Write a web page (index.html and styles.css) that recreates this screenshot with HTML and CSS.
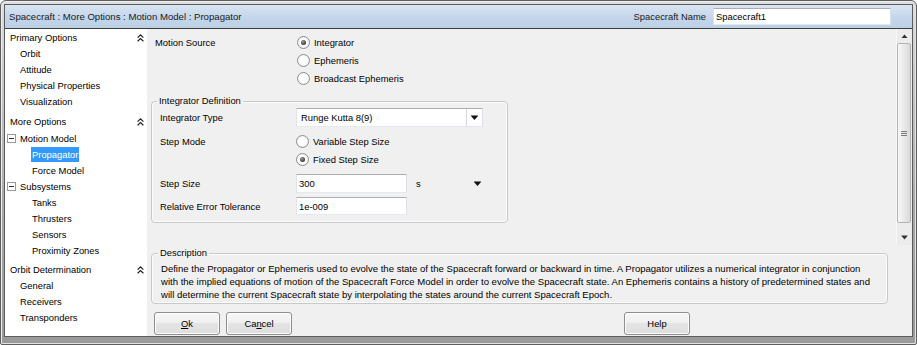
FILE: index.html
```html
<!DOCTYPE html>
<html>
    <head>
        <title>Spacecraft - Propagator</title>
        <link rel="stylesheet" href="styles.css">
    </head>
    <body>
        <div class="window">
            <div class="inner">
                <div class="titlebar">
                    <span class="title">Spacecraft : More Options : Motion Model : Propagator</span>
                    <label class="name-field">Spacecraft Name <input class="textbox name-input" type="text" value="Spacecraft1"></label>
                </div>
                <div class="client">
                    <div class="sidebar">
                        <div class="section">
                            <div class="section-head">Primary Options
                                <svg class="collapse" width="7" height="8" viewBox="0 0 7 8"><path d="M0.6 3.6 L3.5 0.9 L6.4 3.6 M0.6 7.3 L3.5 4.6 L6.4 7.3" fill="none" stroke="#222" stroke-width="1.2"/></svg>
                            </div>
                            <div class="item">Orbit</div>
                            <div class="item">Attitude</div>
                            <div class="item">Physical Properties</div>
                            <div class="item">Visualization</div>
                        </div>
                        <div class="section">
                            <div class="section-head">More Options
                                <svg class="collapse" width="7" height="8" viewBox="0 0 7 8"><path d="M0.6 3.6 L3.5 0.9 L6.4 3.6 M0.6 7.3 L3.5 4.6 L6.4 7.3" fill="none" stroke="#222" stroke-width="1.2"/></svg>
                            </div>
                            <div class="node"><span class="expander"></span>Motion Model</div>
                            <div class="leaf"><span class="selected">Propagator</span></div>
                            <div class="leaf"><span>Force Model</span></div>
                            <div class="node"><span class="expander"></span>Subsystems</div>
                            <div class="leaf"><span>Tanks</span></div>
                            <div class="leaf"><span>Thrusters</span></div>
                            <div class="leaf"><span>Sensors</span></div>
                            <div class="leaf"><span>Proximity Zones</span></div>
                        </div>
                        <div class="section">
                            <div class="section-head">Orbit Determination
                                <svg class="collapse" width="7" height="8" viewBox="0 0 7 8"><path d="M0.6 3.6 L3.5 0.9 L6.4 3.6 M0.6 7.3 L3.5 4.6 L6.4 7.3" fill="none" stroke="#222" stroke-width="1.2"/></svg>
                            </div>
                            <div class="item">General</div>
                            <div class="item">Receivers</div>
                            <div class="item">Transponders</div>
                        </div>
                    </div>
                    <div class="main">
                        <div class="scroll-area">
                            <div class="scroll-content">
                                <div class="motion-source">
                                    <div class="row">
                                        <span class="label wide">Motion Source</span>
                                        <span class="radio checked"></span><span class="radio-text">Integrator</span>
                                    </div>
                                    <div class="row">
                                        <span class="label wide"></span>
                                        <span class="radio"></span><span class="radio-text">Ephemeris</span>
                                    </div>
                                    <div class="row">
                                        <span class="label wide"></span>
                                        <span class="radio"></span><span class="radio-text">Broadcast Ephemeris</span>
                                    </div>
                                </div>
                                <fieldset class="group integrator">
                                    <legend>Integrator Definition</legend>
                                    <div class="row type-row">
                                        <span class="label">Integrator Type</span>
                                        <div class="combo">
                                            <span class="combo-text">Runge Kutta 8(9)</span>
                                            <span class="combo-btn"><svg width="7" height="5" viewBox="0 0 7 5"><path d="M0 1h7L3.5 5z M0 0h7v0.6H0z" fill="#111"/></svg></span>
                                        </div>
                                    </div>
                                    <div class="row mode-row">
                                        <span class="label">Step Mode</span>
                                        <span class="radio"></span><span class="radio-text">Variable Step Size</span>
                                    </div>
                                    <div class="row">
                                        <span class="label"></span>
                                        <span class="radio checked"></span><span class="radio-text">Fixed Step Size</span>
                                    </div>
                                    <div class="row size-row">
                                        <span class="label">Step Size</span>
                                        <input class="textbox field" type="text" value="300">
                                        <span class="unit">s</span>
                                        <svg class="unit-arrow" width="7" height="5" viewBox="0 0 7 5"><path d="M0 1h7L3.5 5z M0 0h7v0.6H0z" fill="#111"/></svg>
                                    </div>
                                    <div class="row tol-row">
                                        <span class="label">Relative Error Tolerance</span>
                                        <input class="textbox field" type="text" value="1e-009">
                                    </div>
                                </fieldset>
                            </div>
                            <div class="scrollbar">
                                <div class="sb-arrow up"><svg width="7" height="4" viewBox="0 0 7 4"><path d="M0.5 4h6L3.5 0.5z" fill="#333"/></svg></div>
                                <div class="sb-track">
                                    <div class="sb-thumb"><span class="grip"></span></div>
                                </div>
                                <div class="sb-arrow down"><svg width="7" height="5" viewBox="0 0 7 5"><path d="M0.5 1h6L3.5 4.5z M0.5 0h6v0.6h-6z" fill="#333"/></svg></div>
                            </div>
                        </div>
                        <fieldset class="group description">
                            <legend>Description</legend>
                            <p>Define the Propagator or Ephemeris used to evolve the state of the Spacecraft forward or backward in time. A Propagator utilizes a numerical integrator in conjunction<br>with the implied equations of motion of the Spacecraft Force Model in order to evolve the Spacecraft state. An Ephemeris contains a history of predetermined states and<br>will determine the current Spacecraft state by interpolating the states around the current Spacecraft Epoch.</p>
                        </fieldset>
                        <div class="button-row">
                            <button class="btn"><u>O</u>k</button>
                            <button class="btn">Ca<u>n</u>cel</button>
                            <button class="btn help">Help</button>
                        </div>
                    </div>
                </div>
            </div>
        </div>
    </body>
</html>
```

FILE: styles.css
```css
body{
    margin: 0;
    font-family: "Liberation Sans", Arial, sans-serif;
    font-size: 9.4px;
    color: #000;
    background-color: #fff;
}

.window{
    width: 917px;
    height: 345px;
    box-sizing: border-box;
    border: 1px solid #5e5e5e;
    border-radius: 6px 6px 2px 2px;
    padding: 3px 3px 7px 3px;
    background: linear-gradient(#dcdfe3, #cdd0d4 15%, #a9a9a9 60%, #9a9a9a);
    box-shadow: inset -1px -1px 0 #e2e2e2, inset 1px 1px 0 #eeeeee;
}

.inner{
    height: 100%;
    box-sizing: border-box;
    border: 1px solid #5c5c5c;
    display: flex;
    flex-direction: column;
}

/* title bar */
.titlebar{
    height: 23px;
    flex: none;
    border-bottom: 1px solid #3d3d3d;
    background: linear-gradient(#d8e4f1, #c3d5ea 60%, #bccfe6);
    display: flex;
    justify-content: space-between;
    align-items: center;
    padding: 0 21px 0 4px;
    color: #1a1a1a;
}

.title{
    font-size: 9.6px;
}

.name-field{
    display: flex;
    align-items: center;
    gap: 7px;
}

.name-input{
    width: 178px;
    height: 17px;
}

.client{
    flex: 1;
    display: flex;
    min-height: 0;
}

/* tree on the left */
.sidebar{
    width: 142px;
    flex: none;
    background-color: #fff;
}

.section + .section{
    margin-top: 3px;
}

.section-head{
    height: 17px;
    display: flex;
    justify-content: space-between;
    align-items: center;
    padding: 0 3px 0 5px;
}

.item{
    height: 16px;
    line-height: 16px;
    padding-left: 15px;
}

.node{
    height: 16px;
    display: flex;
    align-items: center;
    gap: 4px;
    padding-left: 2px;
}

.expander{
    width: 9px;
    height: 9px;
    box-sizing: border-box;
    border: 1px solid #9a9a9a;
    background-color: #fff;
    display: flex;
    align-items: center;
    justify-content: center;
}

.expander::after{
    content: "";
    width: 5px;
    height: 1px;
    background-color: #333;
}

.leaf{
    height: 16px;
    display: flex;
    align-items: center;
    padding-left: 26px;
}

.leaf span{
    height: 15px;
    line-height: 15px;
    padding: 0 1px;
}

.leaf .selected{
    background-color: #3399ff;
    color: #fff;
}

/* right side */
.main{
    flex: 1;
    display: flex;
    flex-direction: column;
    background-color: #f0f0f0;
    min-width: 0;
}

.scroll-area{
    height: 216px;
    flex: none;
    display: flex;
}

.scroll-content{
    flex: 1;
    padding: 4px 0 0 0;
}

.row{
    height: 18px;
    display: flex;
    align-items: center;
}

.label{
    width: 136px;
    flex: none;
}

.label.wide{
    width: 142px;
}

.motion-source{
    padding-left: 8px;
}

.radio{
    width: 13px;
    height: 13px;
    box-sizing: border-box;
    flex: none;
    border: 1px solid #8e8f8f;
    border-radius: 50%;
    background: radial-gradient(circle, #fefefe 45%, #e4e4e4 100%);
    display: flex;
    align-items: center;
    justify-content: center;
}

.radio.checked::after{
    content: "";
    width: 5px;
    height: 5px;
    border-radius: 50%;
    background: radial-gradient(circle at 40% 35%, #a0a0a0, #2a2a2a 80%);
}

.radio-text{
    margin-left: 4px;
}

.group{
    margin: 0;
    border: 1px solid #c9c9c9;
    border-radius: 4px;
    box-shadow: inset 0 0 0 1px #fbfbfb;
}

.group legend{
    padding: 0 2px;
    margin-left: -3px;
    line-height: 12px;
}

.integrator{
    width: 357px;
    box-sizing: border-box;
    margin: 8px 0 0 4px;
    padding: 0 8px 7px 8px;
}

.type-row{
    height: 19px;
    margin-top: 1px;
}

.mode-row{
    margin-top: 5px;
}

.size-row{
    height: 19px;
    margin-top: 6px;
}

.tol-row{
    margin-top: 4px;
}

.textbox{
    box-sizing: border-box;
    border: 1px solid;
    border-color: #abadb3 #dbdfe6 #e3e9ef #e2e3ea;
    background-color: #fff;
    font: inherit;
    color: #000;
    padding: 0 2px;
    margin: 0;
    outline: none;
}

.field{
    width: 111px;
    height: 19px;
}

.tol-row .field{
    height: 18px;
}

.combo{
    width: 187px;
    height: 19px;
    box-sizing: border-box;
    border: 1px solid;
    border-color: #abadb3 #dbdfe6 #e3e9ef #e2e3ea;
    background-color: #fff;
    display: flex;
    align-items: center;
}

.combo-text{
    flex: 1;
    padding-left: 4px;
}

.combo-btn{
    width: 16px;
    height: 100%;
    box-sizing: border-box;
    border-left: 1px solid #d6d6d6;
    display: flex;
    align-items: center;
    justify-content: center;
}

.unit{
    margin-left: 9px;
}

.unit-arrow{
    margin-left: 53px;
}

/* scrollbar */
.scrollbar{
    width: 15px;
    flex: none;
    display: flex;
    flex-direction: column;
    background-color: #ececec;
    border-left: 1px solid #f8f8f8;
}

.sb-arrow{
    display: flex;
    align-items: center;
    justify-content: center;
}

.sb-arrow.up{
    height: 14px;
}

.sb-arrow.down{
    height: 16px;
}

.sb-track{
    flex: 1;
    padding: 0 1px 0 0;
}

.sb-thumb{
    height: 180px;
    box-sizing: border-box;
    border: 1px solid #b4b4b4;
    border-radius: 2px;
    background: linear-gradient(to right, #f8f8f8, #ebebeb 45%, #d9d9d9);
    display: flex;
    align-items: center;
    justify-content: center;
}

.grip{
    width: 6px;
    height: 5px;
    background: repeating-linear-gradient(#7a7a7a 0, #7a7a7a 1px, transparent 1px, transparent 2px);
}

/* description */
.description{
    margin: 2px 24px 0 4px;
    padding: 0 8px 2px 9px;
}

.description p{
    margin: 0;
    padding-top: 3px;
    line-height: 13px;
    font-size: 9.55px;
}

/* buttons */
.button-row{
    display: flex;
    gap: 6px;
    padding: 8px 0 0 7px;
}

.btn{
    width: 66px;
    height: 23px;
    box-sizing: border-box;
    border: 1px solid #8e8e8e;
    border-radius: 3px;
    box-shadow: inset 0 0 0 1px #fcfcfc;
    background: linear-gradient(#f7f7f7, #efefef 50%, #e4e4e4 50%, #dedede);
    font: inherit;
    color: #000;
    padding: 0;
}

.btn.help{
    margin-left: auto;
    margin-right: 222px;
}
```
